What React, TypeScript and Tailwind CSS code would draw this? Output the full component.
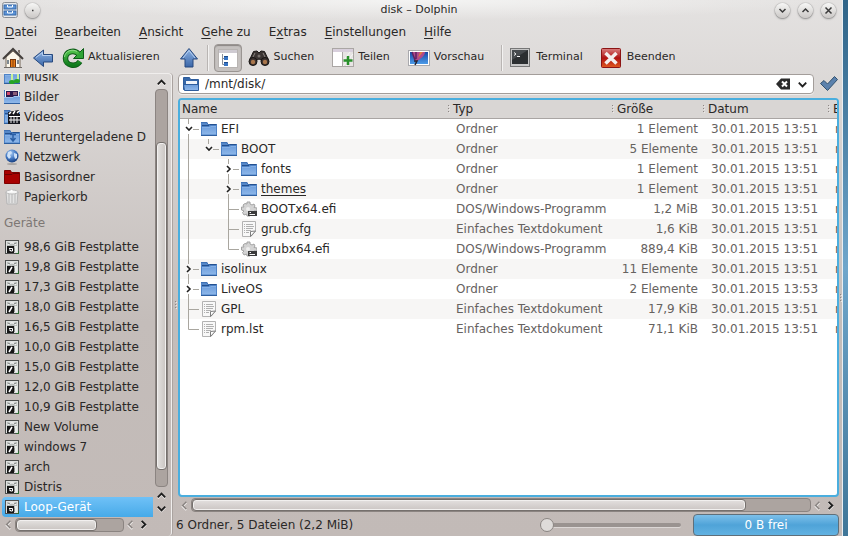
import { useState } from "react";
import type { ReactNode } from "react";

type Kind = "folder" | "text" | "exe";
type Guide = "line" | "blank" | "open" | "openLast" | "closed" | "tee" | "end";

interface Entry {
  name: string;
  kind: Kind;
  guides: Guide[];
  type: string;
  size: string;
  date: string;
}

const entries: Entry[] = [
  { name: "EFI", kind: "folder", guides: ["open"], type: "Ordner", size: "1 Element", date: "30.01.2015 13:51" },
  { name: "BOOT", kind: "folder", guides: ["line", "openLast"], type: "Ordner", size: "5 Elemente", date: "30.01.2015 13:51" },
  { name: "fonts", kind: "folder", guides: ["line", "blank", "closed"], type: "Ordner", size: "1 Element", date: "30.01.2015 13:51" },
  { name: "themes", kind: "folder", guides: ["line", "blank", "closed"], type: "Ordner", size: "1 Element", date: "30.01.2015 13:51" },
  { name: "BOOTx64.efi", kind: "exe", guides: ["line", "blank", "tee"], type: "DOS/Windows-Programm", size: "1,2 MiB", date: "30.01.2015 13:51" },
  { name: "grub.cfg", kind: "text", guides: ["line", "blank", "tee"], type: "Einfaches Textdokument", size: "1,6 KiB", date: "30.01.2015 13:51" },
  { name: "grubx64.efi", kind: "exe", guides: ["line", "blank", "end"], type: "DOS/Windows-Programm", size: "889,4 KiB", date: "30.01.2015 13:51" },
  { name: "isolinux", kind: "folder", guides: ["closed"], type: "Ordner", size: "11 Elemente", date: "30.01.2015 13:51" },
  { name: "LiveOS", kind: "folder", guides: ["closed"], type: "Ordner", size: "2 Elemente", date: "30.01.2015 13:53" },
  { name: "GPL", kind: "text", guides: ["tee"], type: "Einfaches Textdokument", size: "17,9 KiB", date: "30.01.2015 13:51" },
  { name: "rpm.lst", kind: "text", guides: ["end"], type: "Einfaches Textdokument", size: "71,1 KiB", date: "30.01.2015 13:51" },
];

const places = ["Musik", "Bilder", "Videos", "Heruntergeladene D", "Netzwerk", "Basisordner", "Papierkorb"];

const devices = [
  { name: "98,6 GiB Festplatte", mounted: true },
  { name: "19,8 GiB Festplatte", mounted: false },
  { name: "17,3 GiB Festplatte", mounted: false },
  { name: "18,0 GiB Festplatte", mounted: false },
  { name: "16,5 GiB Festplatte", mounted: true },
  { name: "10,0 GiB Festplatte", mounted: false },
  { name: "15,0 GiB Festplatte", mounted: false },
  { name: "12,0 GiB Festplatte", mounted: false },
  { name: "10,9 GiB Festplatte", mounted: false },
  { name: "New Volume", mounted: false },
  { name: "windows 7", mounted: false },
  { name: "arch", mounted: false },
  { name: "Distris", mounted: true },
  { name: "Loop-Gerät", mounted: true },
];

// text before the accelerator, the accelerator itself, text after it
const menus = [
  ["", "D", "atei"],
  ["", "B", "earbeiten"],
  ["", "A", "nsicht"],
  ["", "G", "ehe zu"],
  ["E", "x", "tras"],
  ["", "E", "instellungen"],
  ["", "H", "ilfe"],
];

const Defs = () => (
  <svg width="0" height="0" className="absolute" aria-hidden="true">
    <defs>
      <linearGradient id="folder" x1="0" y1="0" x2="0" y2="1">
        <stop offset="0" stopColor="#6c9cda" />
        <stop offset="1" stopColor="#8fb8ea" />
      </linearGradient>
      <linearGradient id="arrow" x1="0" y1="0" x2="0" y2="1">
        <stop offset="0" stopColor="#8fb4e4" />
        <stop offset="1" stopColor="#3a66a8" />
      </linearGradient>
      <linearGradient id="green" x1="0" y1="0" x2="0" y2="1">
        <stop offset="0" stopColor="#4fc04a" />
        <stop offset="1" stopColor="#0f7a1c" />
      </linearGradient>
      <linearGradient id="red" x1="0" y1="0" x2="0" y2="1">
        <stop offset="0" stopColor="#d98080" />
        <stop offset="0.5" stopColor="#b01212" />
        <stop offset="1" stopColor="#e05a20" />
      </linearGradient>
      <linearGradient id="sky" x1="0" y1="0" x2="0" y2="1">
        <stop offset="0" stopColor="#1747a6" />
        <stop offset="1" stopColor="#4c9be8" />
      </linearGradient>
      <radialGradient id="globe" cx="0.4" cy="0.3" r="0.7">
        <stop offset="0" stopColor="#a9cdf5" />
        <stop offset="0.6" stopColor="#3f74bf" />
        <stop offset="1" stopColor="#183f80" />
      </radialGradient>
    </defs>
  </svg>
);

const Icon = ({ size = 16, children }: { size?: number; children: ReactNode }) => (
  <svg width={size} height={size} viewBox={`0 0 ${size} ${size}`} className="shrink-0" aria-hidden="true">
    {children}
  </svg>
);

const FolderShape = () => (
  <>
    <path d="M0 15V1H6L7 3H16V15Z" fill="#5587c8" />
    <path d="M0 1.500H6L7 3.500H16" stroke="#3e70b4" fill="none" />
    <path d="M1 4.500H8L9 3.500H15" stroke="#24508f" fill="none" />
    <path d="M0.500 5.500H8L9 4.500H15.500V14H0.500Z" fill="url(#folder)" stroke="#4d82c6" />
    <path d="M1 6.500H9L10 5.500H15" stroke="#86b0e6" fill="none" />
    <path d="M0 14.500H16" stroke="#2f5f9f" />
  </>
);

const FileIcon = ({ kind }: { kind: Kind }) => {
  if (kind === "folder") {
    return (
      <Icon>
        <FolderShape />
      </Icon>
    );
  }
  if (kind === "text") {
    return (
      <Icon>
        <path d="M1.500 0.500H14.500V10L10 15.500H1.500Z" fill="#f8f8f8" stroke="#b3b3b3" />
        <path d="M3 3.500H4M5 3.500H12M3 5.500H4M5 5.500H13M3 7.500H4M5 7.500H12M3 9.500H4M5 9.500H10M3 11.500H4M5 11.500H8" stroke="#b0b0b0" />
        <path d="M14.500 10L9.500 15.500V10.500Z" fill="#ffffff" stroke="#7d7d7d" />
      </Icon>
    );
  }
  return (
    <Icon>
      <path
        d="M6 1H9V3L11 4L13 3L14 5L13 6.500L16 7V10L13 10L12 13L9 12V15H6L5.500 13L3 14L1.500 11.500L3 10L0.500 9V6L3 6L2 4L4 2.500L6 3Z"
        fill="#d3d3d3"
        stroke="#a3a3a3"
      />
      <circle cx="7" cy="8" r="2" fill="#eeeeee" />
      <rect x="7" y="10" width="9" height="5" fill="#3b3b3b" />
      <path d="M8.500 11.500H10M8.500 13.500H14" stroke="#f5f5f5" />
    </Icon>
  );
};

const PlaceIcon = ({ name }: { name: string }) => {
  switch (name) {
    case "Musik":
      return (
        <Icon>
          <FolderShape />
          <path d="M8 13V4L14 3V12" stroke="#c9f29a" strokeWidth="2" fill="none" />
          <ellipse cx="8" cy="13" rx="3" ry="2" fill="#25a325" />
          <ellipse cx="13" cy="12" rx="3" ry="2" fill="#25a325" />
        </Icon>
      );
    case "Bilder":
      return (
        <Icon>
          <FolderShape />
          <rect x="1.500" y="1.500" width="13" height="7" fill="#2b1a4c" stroke="#f2f2f2" />
          <rect x="3" y="3" width="3" height="3" fill="#d24a6c" />
          <rect x="9" y="3" width="4" height="3" fill="#8a5c77" />
          <path d="M0 8H9L10 7H16V14H0Z" fill="url(#folder)" />
          <path d="M0 8.500H9L10 7.500H16" stroke="#a5c6ee" fill="none" />
        </Icon>
      );
    case "Videos":
      return (
        <Icon>
          <FolderShape />
          <path d="M4 3L15 1V5H16V15H4Z" fill="#15151c" />
          <path d="M5 5L7 3M9 5L11 2M13 4L15 2" stroke="#ffffff" strokeWidth="1.500" />
          <path d="M5 7.500H16M5 11H16" stroke="#ffffff" />
          <path d="M7 8V14M10 8V14M13 8V14" stroke="#e9e9e9" />
        </Icon>
      );
    case "Heruntergeladene D":
      return (
        <Icon>
          <FolderShape />
          <path d="M6 5.500H12M9 5V11M6.500 9L9 12L11.500 9" stroke="#2a5ea5" strokeWidth="1.500" fill="none" />
        </Icon>
      );
    case "Netzwerk":
      return (
        <Icon>
          <ellipse cx="8" cy="15" rx="5" ry="1" fill="#a9a5a3" />
          <circle cx="8" cy="7" r="6.500" fill="url(#globe)" />
          <path d="M4 3L7 2L8 4L6 6L7 8L5 10L3 7ZM10 4L13 5V9L11 10L10 7Z" fill="#cfe2f8" />
        </Icon>
      );
    case "Basisordner":
      return (
        <Icon>
          <path d="M0.500 14.500V1.500H6.500L7.500 3.500H15.500V14.500Z" fill="#a80000" stroke="#7d0000" />
          <path d="M1 5.500H8L9 4.500H15" stroke="#6a0000" fill="none" />
        </Icon>
      );
    default:
      return (
        <Icon>
          <path d="M2 3H14L13 15H3Z" fill="#e3e3e3" stroke="#b5b5b5" />
          <path d="M5 5V14M8 5V14M11 5V14" stroke="#c5c5c5" strokeWidth="1.500" />
          <ellipse cx="8" cy="3" rx="6" ry="2" fill="#f6f6f6" stroke="#b9b9b9" />
          <path d="M6 3L7 0.500L10 2.500Z" fill="#ffffff" />
        </Icon>
      );
  }
};

const DeviceIcon = ({ mounted }: { mounted: boolean }) => (
  <Icon>
    <rect x="1.500" y="1.500" width="13" height="13" fill="#b9bdbb" stroke="#4d4f4e" />
    <rect x="2.500" y="2.500" width="11" height="11" fill="none" stroke="#dfe2e0" />
    <path d="M4 6C5 3 11 3 12 6" stroke="#eef0ef" strokeWidth="1.500" fill="none" />
    <path d="M4 4.500H6M10 4.500H12" stroke="#8f9391" />
    <path d="M11 7H13V13H11Z" fill="#e9eeea" />
    <path d="M10.500 9V13" stroke="#8f9391" />
    <rect x="3" y="7" width="7" height="7" fill="#161616" />
    {mounted ? (
      <path d="M5 9.500H8.500V12H6.500V11H5" stroke="#ffffff" fill="none" />
    ) : (
      <path d="M5 13L8 8" stroke="#ffffff" strokeWidth="1.500" />
    )}
    <path d="M12 14.500H15M14.500 12V15" stroke="#2f6a33" />
  </Icon>
);

const GuideCell = ({ guide }: { guide: Guide }) => {
  const branch = guide !== "line" && guide !== "blank";
  const chevron = guide === "open" || guide === "openLast" || guide === "closed";
  return (
    <Icon size={20}>
      <g stroke="#a9a69f" fill="none">
        {guide === "line" && <path d="M7.500 0V20" />}
        {guide === "tee" && <path d="M7.500 0V20M8 10.500H18" />}
        {guide === "end" && <path d="M7.500 0V10.500H18" />}
        {branch && chevron && <path d="M7.500 0V5M12 10.500H18" />}
        {(guide === "open" || guide === "closed") && <path d="M7.500 15V20" />}
      </g>
      {guide === "closed" && <path d="M6 7L9 10L6 13" stroke="#202020" strokeWidth="1.600" fill="none" />}
      {(guide === "open" || guide === "openLast") && (
        <path d="M5 8L8 11L11 8" stroke="#202020" strokeWidth="1.600" fill="none" />
      )}
    </Icon>
  );
};

const arrows = {
  up: "M3 9L7 5L11 9",
  down: "M3 5L7 9L11 5",
  left: "M9 3L5 7L9 11",
  right: "M5 3L9 7L5 11",
};

const ArrowButton = ({ dir, dim }: { dir: keyof typeof arrows; dim?: boolean }) => (
  <button type="button" aria-label={dir} className="flex size-[13px] shrink-0 items-center justify-center">
    <svg width="13" height="13" viewBox="0 0 14 14">
      <path d={arrows[dir]} transform="translate(0 1)" stroke="#f2efee" strokeWidth="2" fill="none" />
      <path d={arrows[dir]} stroke={dim ? "#88827f" : "#1d1d1d"} strokeWidth={dim ? "1.500" : "2"} fill="none" />
    </svg>
  </button>
);

const RoundButton = ({ label, d }: { label: string; d: string }) => (
  <button
    type="button"
    aria-label={label}
    className="flex size-[15px] items-center justify-center rounded-full bg-linear-to-b from-[#f7f7f6] to-[#cbc8c6] shadow-[0_1px_2px_#55555599,0_0_1px_#666666]"
  >
    <svg width="9" height="9" viewBox="0 0 9 9">
      <path d={d} stroke="#3a3a3a" strokeWidth="1.500" fill="none" />
    </svg>
  </button>
);

const HomeIcon = () => (
  <Icon size={22}>
    <path d="M4 10V20.500H18V10L11 4Z" fill="#fbf6ea" stroke="#77695a" />
    <path d="M1 12L11 2L21 12" stroke="#443f3c" strokeWidth="2" fill="none" />
    <path d="M16 3H18V7L16 5Z" fill="#7b7069" />
    <rect x="8.500" y="12.500" width="5" height="8" fill="#e57a16" stroke="#71340c" />
    <path d="M11 13V20" stroke="#82400f" />
    <rect x="5" y="13" width="2" height="4" fill="#7e8992" />
    <rect x="15" y="13" width="2" height="4" fill="#7e8992" />
    <path d="M2 20.500H20" stroke="#6f6a66" />
  </Icon>
);

const BackIcon = () => (
  <Icon size={22}>
    <path d="M1.500 11L11.500 3V7.500H20.500V15H11.500V19.500Z" fill="url(#arrow)" stroke="#27497e" strokeLinejoin="round" />
    <path d="M4 10.500L10.500 5.500V8.500H19" stroke="#b4cef0" fill="none" />
  </Icon>
);

const UpIcon = () => (
  <Icon size={22}>
    <path d="M11 1.500L19.500 12H15V20H7V12H2.500Z" fill="url(#arrow)" stroke="#27497e" strokeLinejoin="round" />
    <path d="M5 11L11 3.500L17 11" stroke="#b4cef0" fill="none" />
  </Icon>
);

// open ring running counter-clockwise with the head at the upper right
const RefreshIcon = () => (
  <Icon size={22}>
    <path
      d="M16.500 7C12.500 2.500 3.500 4 3.500 11.500C3.500 19 14 20.500 18 14.500"
      stroke="#0d5d17"
      strokeWidth="5.500"
      fill="none"
    />
    <path d="M21.500 1.500V11.500H11.500Z" fill="#2fa336" stroke="#0d5d17" strokeLinejoin="round" />
    <path
      d="M16.500 7C12.500 2.500 3.500 4 3.500 11.500C3.500 19 14 20.500 18 14.500"
      stroke="url(#green)"
      strokeWidth="3.500"
      fill="none"
    />
    <path d="M15 4.500C10 1.500 3 4 2.500 10" stroke="#8edb86" fill="none" />
  </Icon>
);

const TreeViewIcon = () => (
  <Icon size={22}>
    <rect x="1.500" y="2.500" width="19" height="18" fill="#ffffff" stroke="#b8b4b2" />
    <path d="M2 4.500H20" stroke="#cfcbd2" strokeWidth="3" />
    <path d="M5.500 7V17.500H9M5.500 11.500H9" stroke="#8a9099" fill="none" />
    <rect x="7" y="9" width="4" height="4" fill="#3774c4" />
    <rect x="7" y="15" width="4" height="4" fill="#3774c4" />
    <path d="M7 9.500H11M7 15.500H11" stroke="#1c4b8c" />
  </Icon>
);

const BinocularsIcon = () => (
  <Icon size={22}>
    <path d="M5.500 4.500L9 4L11 6L13 4L16.500 4.500L20 12L15 14L11 12L7 14L2 12Z" fill="#3a3432" stroke="#1b1715" />
    <circle cx="5" cy="14.500" r="4" fill="#3b3230" stroke="#161311" />
    <circle cx="17" cy="14.500" r="4" fill="#3b3230" stroke="#161311" />
    <circle cx="5" cy="15" r="2.200" fill="#a9764c" />
    <circle cx="17" cy="15" r="2.200" fill="#a9764c" />
    <path d="M7 6L5 10M15 6L17 10" stroke="#8b8480" />
    <circle cx="11" cy="9" r="1.500" fill="#77706c" />
  </Icon>
);

const SplitIcon = () => (
  <Icon size={22}>
    <rect x="0.500" y="1.500" width="21" height="18" fill="#ffffff" stroke="#aaa6a4" />
    <path d="M1 3.500H21" stroke="#d8cfdc" strokeWidth="3" />
    <rect x="11" y="5" width="10" height="14" fill="#e7e4e4" />
    <path d="M11 19L21 7M14 19L21 11M11 14L18 5" stroke="#f7f7f7" />
    <path d="M10.500 5V19" stroke="#aaa6a4" />
    <path d="M11.500 13.500H20.500M16 9V18" stroke="#28902a" strokeWidth="2.500" />
  </Icon>
);

const PreviewIcon = () => (
  <Icon size={22}>
    <rect x="0.500" y="3.500" width="21" height="15" fill="#ffffff" stroke="#a9a9ad" />
    <rect x="2" y="5" width="18" height="12" fill="url(#sky)" />
    <path d="M4 5H17C17 9 12 12 8 15L6 12Z" fill="#b0498a" />
    <path d="M4 5L7 13M8 5L8 12" stroke="#5d2260" strokeWidth="1.500" />
    <path d="M12 5H15L10 11Z" fill="#e0793e" />
    <path d="M6 14L9 14L7 18" stroke="#25212c" strokeWidth="1.500" fill="none" />
  </Icon>
);

const TerminalIcon = () => (
  <Icon size={22}>
    <rect x="0.500" y="1.500" width="19" height="18" fill="#c7c7c7" stroke="#777777" />
    <rect x="2" y="3" width="16" height="14" fill="#2c2f31" />
    <path d="M2 3H18L2 13Z" fill="#474b4e" />
    <path d="M4 5.500L6 7L4 8.500M7 9.500H10" stroke="#f1f1f1" fill="none" />
  </Icon>
);

const QuitIcon = () => (
  <Icon size={22}>
    <rect x="0.500" y="1.500" width="19" height="19" rx="1" fill="url(#red)" stroke="#8c1414" />
    <path d="M4.500 6L15.500 16.500M15.500 6L4.500 16.500" stroke="#f4efee" strokeWidth="3.500" />
  </Icon>
);

const ToolButton = ({ label, icon, text }: { label: string; icon: ReactNode; text?: boolean }) => (
  <button
    type="button"
    aria-label={label}
    className={`flex items-center gap-1 pl-0.5 ${text ? "pr-3" : "pr-0.5"}`}
  >
    {icon}
    {text && <span className="pb-0.5 whitespace-nowrap">{label}</span>}
  </button>
);

const Separator = () => <div className="mx-px h-[26px] w-0.5 border-l border-[#b9b5b3] bg-[#f3f2f1]" />;

const Grip = () => (
  <div className="flex flex-col gap-0.5">
    <i className="size-px bg-[#8d8683] shadow-[1px_1px_#ece8e6]" />
    <i className="size-px bg-[#8d8683] shadow-[1px_1px_#ece8e6]" />
    <i className="size-px bg-[#8d8683] shadow-[1px_1px_#ece8e6]" />
  </div>
);

const HeaderCell = ({ children }: { children: string }) => (
  <th className="p-0 text-left font-normal">
    <div className="flex items-center gap-1 pl-px">
      <Grip />
      {children}
    </div>
  </th>
);

const Sidebar = () => {
  const [selected, setSelected] = useState("Loop-Gerät");

  return (
    <aside className="flex w-[172px] shrink-0 flex-col rounded-r-sm border-t border-r border-[#f0eeed] shadow-[1px_0_#aaa3a0]">
      <div className="flex min-h-0 flex-1">
        <div className="min-w-0 flex-1 overflow-hidden px-0.5">
          <ul className="-mt-[7px]">
            {places.map((place) => (
              <li key={place}>
                <button
                  type="button"
                  onClick={() => setSelected(place)}
                  className="flex h-5 w-full items-center gap-1 pl-0.5 text-left whitespace-nowrap"
                >
                  <PlaceIcon name={place} />
                  {place}
                </button>
              </li>
            ))}
          </ul>
          <h2 className="h-[30px] pt-2 pl-0.5 text-[#7d7774]">Geräte</h2>
          <ul>
            {devices.map(({ name, mounted }) => (
              <li key={name}>
                <button
                  type="button"
                  onClick={() => setSelected(name)}
                  className={`flex h-5 w-full items-center gap-1 pl-0.5 text-left whitespace-nowrap ${
                    selected === name
                      ? "rounded-l-sm bg-linear-to-b from-[#6fc1f7] to-[#46aae8] text-white"
                      : ""
                  }`}
                >
                  <DeviceIcon mounted={mounted} />
                  {name}
                </button>
              </li>
            ))}
          </ul>
        </div>
        <div className="mr-[3px] flex w-[13px] flex-col">
          <div className="flex h-[15px] items-end">
            <ArrowButton dir="up" />
          </div>
          <div className="mb-0.5 flex flex-1 flex-col rounded border border-[#8b8481] bg-[#aca4a0] pt-[52px] pb-4">
            <div className="flex-1 rounded-sm border border-[#75706d] bg-linear-to-r from-[#e4e2e0] to-[#c9c4c1] shadow-[inset_0_0_0_1px_#f2f0ef]" />
          </div>
          <ArrowButton dir="up" />
          <ArrowButton dir="down" />
          <div className="h-0.5" />
        </div>
      </div>
      <div className="mb-1 flex h-[15px] items-center pl-0.5">
        <ArrowButton dir="left" dim />
        <div className="h-[14px] w-[109px] rounded border border-[#8b8481] bg-[#aca4a0] pr-[26px]">
          <div className="h-3 rounded-sm border border-[#75706d] bg-linear-to-b from-[#e4e2e0] to-[#c9c4c1] shadow-[inset_0_0_0_1px_#f2f0ef]" />
        </div>
        <ArrowButton dir="left" dim />
        <ArrowButton dir="right" />
      </div>
    </aside>
  );
};

const FileTable = () => (
  <div className="min-h-0 flex-1 overflow-hidden rounded border-2 border-[#4aaede] bg-white">
    <table className="w-full table-fixed border-collapse whitespace-nowrap">
      <colgroup>
        <col />
        <col className="w-[164px]" />
        <col className="w-[91px]" />
        <col className="w-[125px]" />
        <col className="w-[10px]" />
      </colgroup>
      <thead>
        <tr className="h-[18px] border-b border-[#a9a5a3] bg-[#d9d6d4]">
          <th className="p-0 pl-0.5 text-left font-normal">Name</th>
          <HeaderCell>Typ</HeaderCell>
          <HeaderCell>Größe</HeaderCell>
          <HeaderCell>Datum</HeaderCell>
          <HeaderCell>Eigentümer</HeaderCell>
        </tr>
      </thead>
      <tbody className="text-[#66625f]">
        {entries.map((entry) => (
          <tr key={entry.name} className="h-5 even:bg-[#f7f6f5]">
            <td className="p-0">
              <div className="flex h-5 items-center pl-px text-[#2a2827]">
                {entry.guides.map((guide, i) => (
                  <GuideCell key={i} guide={guide} />
                ))}
                <FileIcon kind={entry.kind} />
                <span className={entry.name === "themes" ? "ml-1 underline underline-offset-2" : "ml-1"}>
                  {entry.name}
                </span>
              </div>
            </td>
            <td className="p-0 pl-[9px]">{entry.type}</td>
            <td className="p-0 pr-1 text-right">{entry.size}</td>
            <td className="p-0 pl-[9px]">{entry.date}</td>
            <td className="overflow-hidden p-0 pl-2">root</td>
          </tr>
        ))}
      </tbody>
    </table>
  </div>
);

const App = () => {
  const [path, setPath] = useState("/mnt/disk/");
  const [zoom, setZoom] = useState(0);

  return (
    <div className="flex h-screen overflow-hidden bg-linear-to-b from-[#2f6488] via-[#6fa6cb] to-[#3f7698] font-['DejaVu_Sans',sans-serif] text-[12px] leading-4 text-[#2a2827]">
      <Defs />
      <div className="mr-[5px] flex min-w-0 flex-1 flex-col border-r border-[#e9eef2] bg-linear-to-b from-[#e4e2e1] via-[#c4bdba] via-60% to-[#c2bab7]">
        <header className="flex h-5 shrink-0 items-center bg-[radial-gradient(ellipse_at_top,#f4f4f3,transparent_70%)] px-0.5 text-[11px]">
          <div className="flex flex-1 items-center gap-[7px]">
            <Icon>
              <rect x="0.500" y="0.500" width="15" height="15" rx="2" fill="#e8eaed" stroke="#8a8f96" />
              <rect x="2" y="3" width="12" height="4" fill="#5a93d8" stroke="#3768a8" />
              <rect x="2" y="9" width="12" height="4" fill="#5a93d8" stroke="#3768a8" />
              <path d="M5.500 3V5H10.500V3M5.500 9V11H10.500V9" stroke="#ffffff" fill="none" />
            </Icon>
            <RoundButton label="Auf allen Arbeitsflächen" d="M4 4.500H5.500" />
          </div>
          <h1>disk – Dolphin</h1>
          <div className="flex flex-1 justify-end gap-2 pr-1">
            <RoundButton label="Minimieren" d="M1.500 3L4.500 6L7.500 3" />
            <RoundButton label="Maximieren" d="M1.500 6L4.500 3L7.500 6" />
            <RoundButton label="Schließen" d="M1.500 1.500L7.500 7.500M7.500 1.500L1.500 7.500" />
          </div>
        </header>

        <nav className="flex h-[22px] shrink-0 items-center gap-[18px] pt-0.5 pl-[5px]">
          {menus.map(([before, key, after]) => (
            <button type="button" key={before + key + after} className="whitespace-nowrap">
              {before}
              <span className="underline underline-offset-2">{key}</span>
              {after}
            </button>
          ))}
        </nav>

        <div className="flex h-[31px] shrink-0 items-center gap-1 text-[11px]">
          <ToolButton label="Persönlicher Ordner" icon={<HomeIcon />} />
          <ToolButton label="Zurück" icon={<BackIcon />} />
          <ToolButton label="Aktualisieren" icon={<RefreshIcon />} text />
          <ToolButton label="Aufwärts" icon={<UpIcon />} />
          <Separator />
          <button
            type="button"
            aria-label="Details"
            aria-pressed="true"
            className="flex h-7 w-7 items-center justify-center rounded border border-[#9a9592] bg-[#c5c1bf] shadow-[inset_0_1px_1px_#8a8683]"
          >
            <TreeViewIcon />
          </button>
          <ToolButton label="Suchen" icon={<BinocularsIcon />} text />
          <ToolButton label="Teilen" icon={<SplitIcon />} text />
          <ToolButton label="Vorschau" icon={<PreviewIcon />} text />
          <Separator />
          <ToolButton label="Terminal" icon={<TerminalIcon />} text />
          <ToolButton label="Beenden" icon={<QuitIcon />} text />
        </div>

        <div className="flex min-h-0 flex-1">
          <Sidebar />
          <div className="flex w-1.5 shrink-0 items-center justify-center">
            <Grip />
          </div>
          <main className="flex min-w-0 flex-1 flex-col">
            <div className="flex h-[25px] shrink-0 items-start gap-1.5 pt-px">
              <div className="flex h-5 flex-1 items-center gap-1.5 rounded border border-[#a39d9a] bg-white px-1 shadow-[0_1px_#efedec]">
                <Icon>
                  <path d="M0.500 13.500V1.500H6.500L7.500 3.500H15.500V13.500Z" fill="#3667a8" stroke="#2d5c9c" />
                  <path d="M3 5H14V9H3Z" fill="#f1f5fa" />
                  <path d="M0.500 8.500H15.500V14.500H1.500Z" fill="url(#folder)" stroke="#2d5c9c" />
                </Icon>
                <input
                  aria-label="Adresse"
                  value={path}
                  onChange={(e) => setPath(e.target.value)}
                  className="min-w-0 flex-1 outline-none"
                />
                <button type="button" aria-label="Eingabe löschen" onClick={() => setPath("")}>
                  <svg width="14" height="12" viewBox="0 0 14 12">
                    <path d="M0 6L5 0.500H14V11.500H5Z" fill="#2b2b2b" />
                    <path d="M6 3.500L11 8.500M11 3.500L6 8.500" stroke="#ffffff" strokeWidth="2" />
                  </svg>
                </button>
                <ArrowButton dir="down" />
              </div>
              <button type="button" aria-label="Übernehmen" className="mr-1">
                <svg width="18" height="18" viewBox="0 0 18 18">
                  <path
                    d="M0.500 9.500L4 6.500L7.500 10L14.500 2.500L17.500 5.500L7.500 16.500Z"
                    fill="#5c82ad"
                    stroke="#33526f"
                    strokeLinejoin="round"
                  />
                </svg>
              </button>
            </div>

            <div className="flex min-h-0 flex-1">
              <FileTable />
              <div className="flex w-[3px] shrink-0 items-center justify-center">
                <Grip />
              </div>
            </div>

            <div className="flex h-4 shrink-0 items-center pr-[5px]">
              <ArrowButton dir="left" dim />
              <div className="h-[14px] flex-1 rounded border border-[#8b8481] bg-[#aca4a0] pr-16">
                <div className="h-3 rounded-sm border border-[#75706d] bg-linear-to-b from-[#e4e0df] to-[#cbc5c3] shadow-[inset_0_0_0_1px_#f2f0ef]" />
              </div>
              <ArrowButton dir="left" dim />
              <ArrowButton dir="right" />
            </div>

            <footer className="-ml-0.5 flex h-[23px] shrink-0 items-center pr-[3px]">
              <p className="flex-1">6 Ordner, 5 Dateien (2,2 MiB)</p>
              <input
                type="range"
                aria-label="Symbolgröße"
                min={0}
                max={16}
                value={zoom}
                onChange={(e) => setZoom(Number(e.target.value))}
                className="mr-3 h-4 w-[141px] appearance-none bg-transparent [&::-webkit-slider-runnable-track]:h-1 [&::-webkit-slider-runnable-track]:rounded-full [&::-webkit-slider-runnable-track]:bg-[#9a9390] [&::-webkit-slider-runnable-track]:shadow-[0_1px_#dcd7d5] [&::-webkit-slider-thumb]:-mt-[5px] [&::-webkit-slider-thumb]:size-[14px] [&::-webkit-slider-thumb]:appearance-none [&::-webkit-slider-thumb]:rounded-full [&::-webkit-slider-thumb]:border [&::-webkit-slider-thumb]:border-[#8a8582] [&::-webkit-slider-thumb]:bg-[#dedbd9]"
              />
              <div className="flex h-[22px] w-[146px] items-center justify-center rounded border border-[#5f6f7a] bg-linear-to-b from-[#7cc0ea] via-[#4fa3d8] to-[#62b2e2] text-white">
                0 B frei
              </div>
            </footer>
          </main>
        </div>
      </div>
    </div>
  );
};

export default App;
